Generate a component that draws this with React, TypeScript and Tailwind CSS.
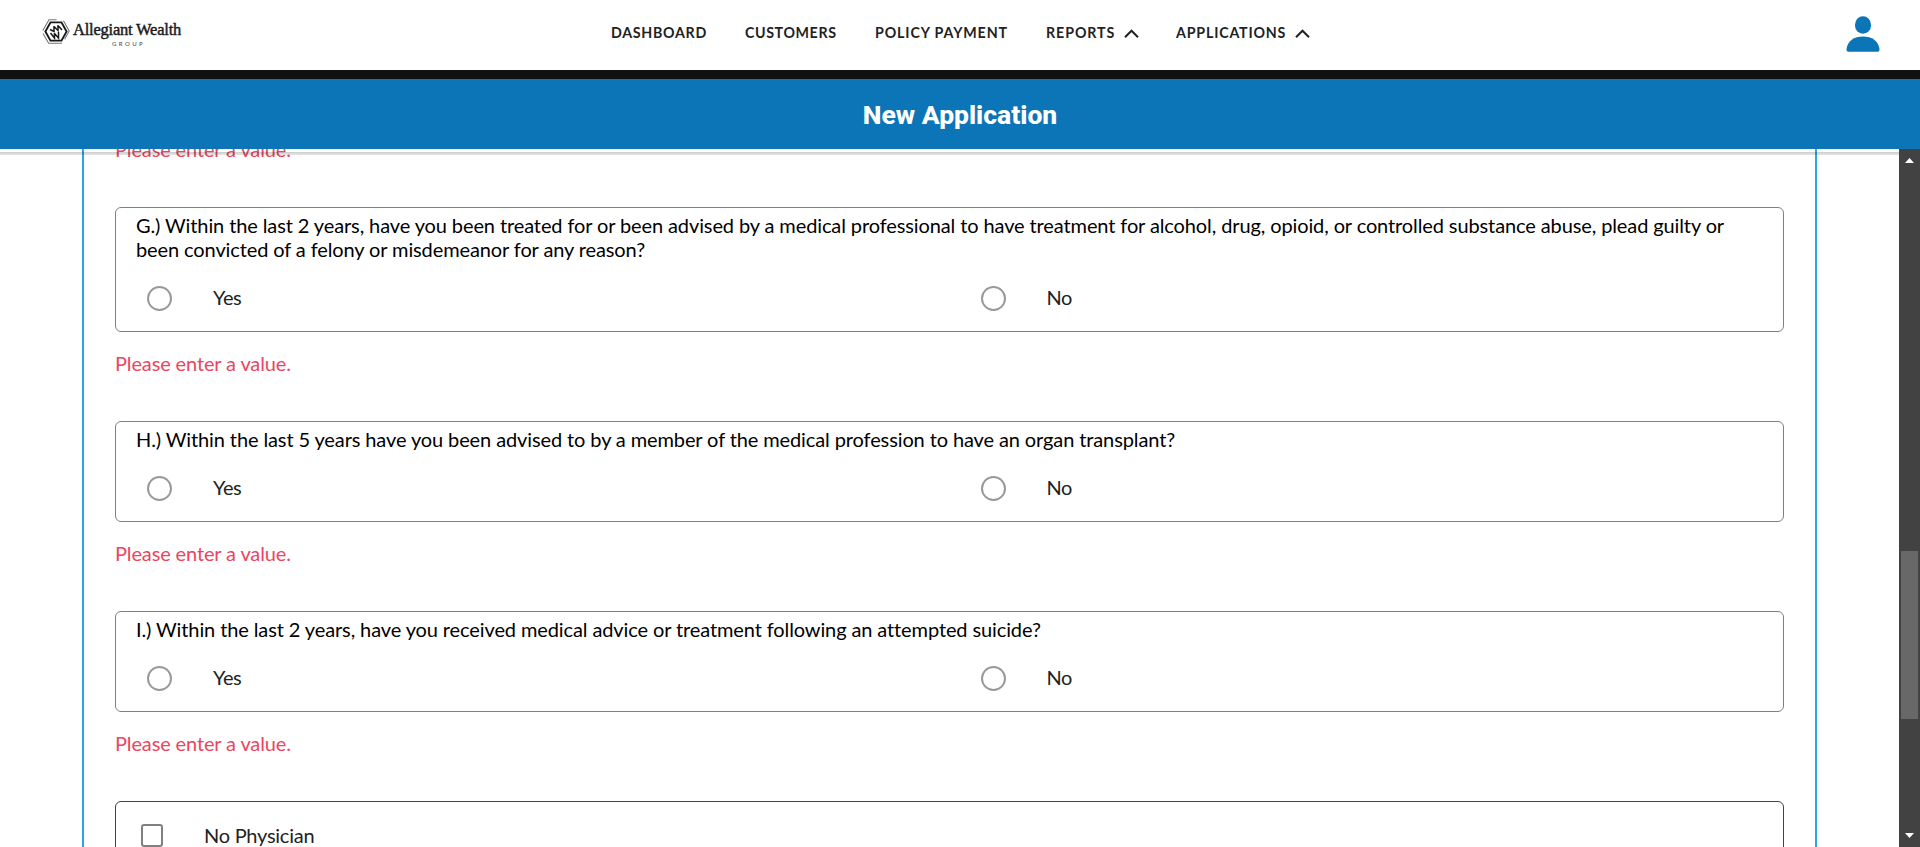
import React from 'react';

function Logo() {
  return (
    <div className="flex h-[70px] w-[140px] shrink-0 items-start">
      <svg className="mt-[19px] h-[25px] w-[28px] shrink-0" viewBox="0 0 28 25" fill="none">
        <path d="M8.5 3.4h11l5.1 9.1-5.1 9.1h-11L3.4 12.5z" stroke="#1a1a1a" strokeWidth="1.9" />
        <path d="M0.8 11.5 7 .8h7.5M21.5 1.8l5.7 10.2-4.6 8.2M1 14.5l5.7 9.7h13.3" stroke="#777" strokeWidth="1.1" />
        <path d="M8 10.5l4 2V7M12 7.500l4 4V6M16 6.500l4 4.500M8.500 14l4 5V14M12.500 14.500l4 4.500V13" stroke="#1a1a1a" strokeWidth="1.500" />
      </svg>
      <div className="mt-[20px] ml-[3px] flex flex-col items-center font-['Liberation_Serif',serif] whitespace-nowrap">
        <span className="text-[16.5px] leading-5 tracking-[-0.22px] text-[#1a1a1a] [-webkit-text-stroke:0.45px_#1a1a1a]">Allegiant Wealth</span>
        <span className="pl-[3px] font-['Lato',sans-serif] text-[6px] leading-[8px] tracking-[2.4px] text-[#444]">GROUP</span>
      </div>
    </div>
  );
}

function NavItem({ label, className, caret }: { label: string; className: string; caret?: boolean }) {
  return (
    <a className={`flex shrink-0 items-center gap-[9px] whitespace-nowrap ${className}`}>
      <span>{label}</span>
      {caret && (
        <svg className="mt-px h-[9px] w-[15px] shrink-0" viewBox="0 0 15 9" fill="none" stroke="#222" strokeWidth="2">
          <path d="M1 8.200 7.500 1.700 14 8.200" />
        </svg>
      )}
    </a>
  );
}

function Radio({ label }: { label: string }) {
  return (
    <label className="flex flex-1 items-center pl-[31px]">
      <span className="size-[25px] shrink-0 rounded-full border-2 border-[#999]" />
      <span className="-mt-[3px] ml-[41px] leading-6 tracking-[-0.4px] text-[#222]">{label}</span>
    </label>
  );
}

function ErrorText() {
  return <p className="h-[89px] pt-[19px] leading-6 tracking-[-0.13px] text-[#ea4660]">Please enter a value.</p>;
}

function Question({ lines }: { lines: string[] }) {
  return (
    <>
      <fieldset className="rounded-md border border-[#808080] pt-[5px] pb-[20px]">
        <div className="pl-[20px]">
          {lines.map((line) => (
            <p key={line} className="h-6 leading-6 whitespace-nowrap text-black">
              {line}
            </p>
          ))}
        </div>
        <div className="mt-[25px] flex h-[25px] items-center">
          <Radio label="Yes" />
          <Radio label="No" />
        </div>
      </fieldset>
      <ErrorText />
    </>
  );
}

const questions: string[][] = [
  [
    'G.) Within the last 2 years, have you been treated for or been advised by a medical professional to have treatment for alcohol, drug, opioid, or controlled substance abuse, plead guilty or',
    'been convicted of a felony or misdemeanor for any reason?',
  ],
  ['H.) Within the last 5 years have you been advised to by a member of the medical profession to have an organ transplant?'],
  ['I.) Within the last 2 years, have you received medical advice or treatment following an attempted suicide?'],
];

export default function App() {
  return (
    <div className="flex h-[847px] w-full flex-col overflow-hidden bg-white font-['Lato',sans-serif]">
      <header className="flex h-[70px] shrink-0 pl-[42px]">
        <Logo />
        <nav className="ml-[429px] flex h-[66px] text-[14.25px] font-bold text-[#222]">
          <NavItem label="DASHBOARD" className="w-[134px] tracking-[0.7px]" />
          <NavItem label="CUSTOMERS" className="w-[130px] tracking-[0.6px]" />
          <NavItem label="POLICY PAYMENT" className="w-[171px] tracking-[0.86px]" />
          <NavItem label="REPORTS" className="w-[130px] tracking-[0.9px]" caret />
          <NavItem label="APPLICATIONS" className="w-[140px] tracking-[0.8px]" caret />
        </nav>
        <svg className="mt-[16px] mr-[40px] ml-auto h-[36px] w-[34px]" viewBox="0 0 34 36" fill="#0c75b8">
          <rect x="9" y="0.300" width="16" height="17.500" rx="8" ry="8.300" />
          <path d="M0.500 33C1.500 25 8 20.500 17 20.500S32.500 25 33.500 33q.2 2.700-2 2.700H2.500Q.300 35.700.500 33z" />
        </svg>
      </header>
      <div className="h-[9px] shrink-0 bg-[#111]" />
      <div className="flex h-[70px] shrink-0 items-center justify-center bg-[#0c75b8] pt-px font-['Roboto',sans-serif] text-[26.5px] font-extrabold text-white">
        New Application
      </div>
      <div className="relative flex min-h-0 flex-1">
        <main className="mr-[82px] ml-[82px] flex-1 overflow-hidden border-x-2 border-[#29a8dc] px-[31px] text-[20px] tracking-[-0.11px]">
          <div className="-mt-[31px]">
            <ErrorText />
            {questions.map((lines) => (
              <Question key={lines[0]} lines={lines} />
            ))}
            <div className="flex h-[100px] items-start rounded-t-md border border-[#444] pt-[22px] pl-[25px]">
              <span className="h-[23px] w-[22px] shrink-0 rounded-[3px] border-2 border-[#808080]" />
              <span className="-mt-px ml-[41px] leading-6 tracking-[-0.25px] text-[#222]">No Physician</span>
            </div>
          </div>
        </main>
        <div className="flex w-[21px] shrink-0 flex-col items-center bg-[#424242]">
          <svg className="mt-[9px] h-[5px] w-[9px] shrink-0" viewBox="0 0 9 5" fill="#fff">
            <path d="M0 5 4.500 0 9 5z" />
          </svg>
          <div className="mt-[388px] h-[168px] w-[17px] shrink-0 bg-[#686868]" />
          <svg className="mt-[114px] h-[5px] w-[9px] shrink-0" viewBox="0 0 9 5" fill="#fff">
            <path d="M0 0 4.500 5 9 0z" />
          </svg>
        </div>
        <div className="absolute top-[3px] right-[21px] left-0 h-[3px] bg-linear-to-b from-black/20 to-black/10" />
      </div>
    </div>
  );
}
